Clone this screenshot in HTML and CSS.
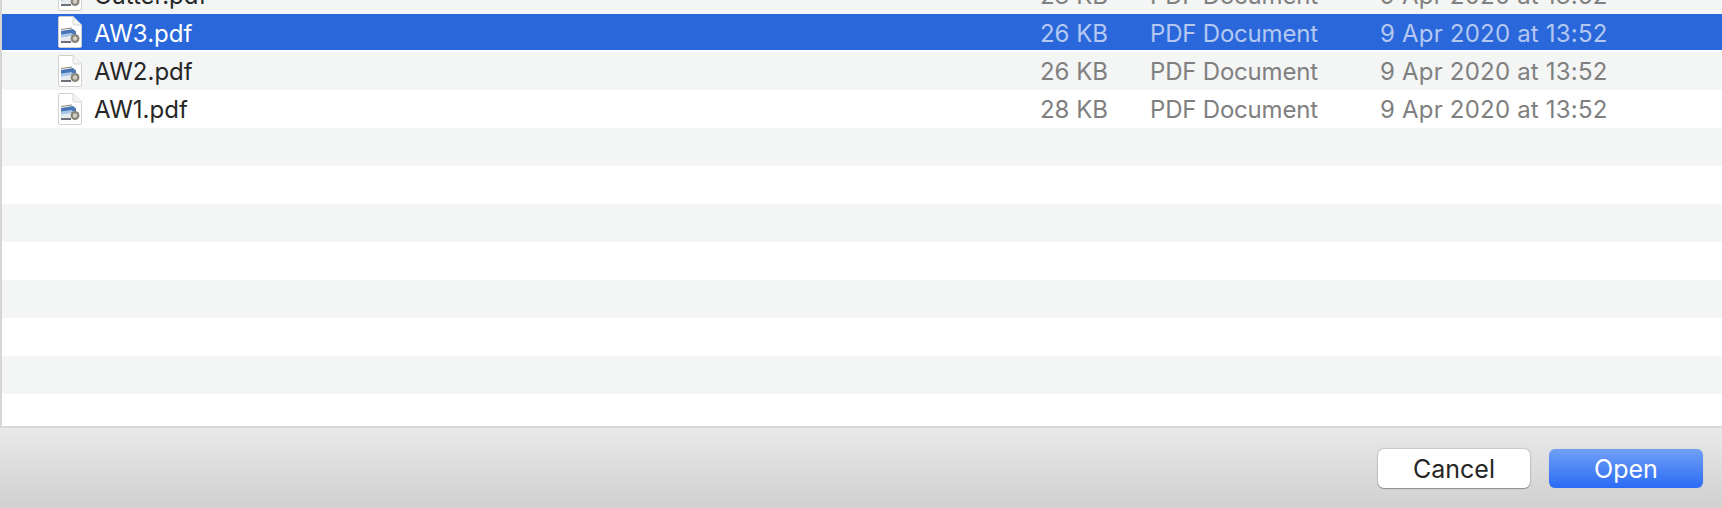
FILE: index.html
```html
<!DOCTYPE html>
<html lang="en">
<head>
    <meta charset="UTF-8">
    <meta name="viewport" content="width=device-width, initial-scale=1.0">
    <title>Open file</title>
    <link rel="stylesheet" href="styles.css">
</head>
<body>
    <svg class="defs" width="0" height="0">
        <symbol id="pdf-icon" viewBox="0 0 24 32">
            <path d="M1.5 .5H15L23.5 9V30a1.5 1.5 0 0 1-1.5 1.5H2A1.5 1.5 0 0 1 .5 30V2A1.5 1.5 0 0 1 1.5 .5Z" fill="#fff" stroke="#cfcfcf"/>
            <path d="M15 .5V7.5a1.5 1.5 0 0 0 1.5 1.5H23.5" fill="#f3f3f3" stroke="#d6d6d6"/>
            <path d="M3 15L15 13L18 15.5V18L3 20Z" fill="#4a76b8"/>
            <path d="M3 13.5L14 12" stroke="#8f8578" stroke-width="1" fill="none"/>
            <path d="M3 18.5L14 17V20L3 22Z" fill="#a9c8e8"/>
            <path d="M3 22L12 20.5V26H3Z" fill="#e6ebf0"/>
            <path d="M3 25H13V27H3Z" fill="#6d7078"/>
            <circle cx="17" cy="22.5" r="4.5" fill="#8a857b"/>
            <circle cx="17" cy="22.5" r="2.2" fill="#d2cec4"/>
        </symbol>
    </svg>
    <div class="dialog">
        <div class="file-list">
            <div class="row">
                <svg class="file-icon"><use href="#pdf-icon"/></svg>
                <span class="name">Cutter.pdf</span>
                <span class="size">23 KB</span>
                <span class="kind">PDF Document</span>
                <span class="date">9 Apr 2020 at 13:52</span>
            </div>
            <div class="row selected">
                <svg class="file-icon"><use href="#pdf-icon"/></svg>
                <span class="name">AW3.pdf</span>
                <span class="size">26 KB</span>
                <span class="kind">PDF Document</span>
                <span class="date">9 Apr 2020 at 13:52</span>
            </div>
            <div class="row">
                <svg class="file-icon"><use href="#pdf-icon"/></svg>
                <span class="name">AW2.pdf</span>
                <span class="size">26 KB</span>
                <span class="kind">PDF Document</span>
                <span class="date">9 Apr 2020 at 13:52</span>
            </div>
            <div class="row plain">
                <svg class="file-icon"><use href="#pdf-icon"/></svg>
                <span class="name">AW1.pdf</span>
                <span class="size">28 KB</span>
                <span class="kind">PDF Document</span>
                <span class="date">9 Apr 2020 at 13:52</span>
            </div>
            <div class="row"></div>
            <div class="row plain"></div>
            <div class="row"></div>
            <div class="row plain"></div>
            <div class="row"></div>
            <div class="row plain"></div>
            <div class="row"></div>
            <div class="row plain"></div>
        </div>
        <div class="footer">
            <button class="btn cancel">Cancel</button>
            <button class="btn open">Open</button>
        </div>
    </div>
</body>
</html>
```

FILE: styles.css
```css
html, body {
    margin: 0;
    height: 100%;
    overflow: hidden;
}
body {
    font-family: Inter, "Liberation Sans", sans-serif;
    background-color: #fff;
}
.defs {
    display: block;
    height: 0;
}
.dialog {
    display: flex;
    flex-direction: column;
    height: 508px;
}
.file-list {
    height: 426px;
    overflow: hidden;
    border-left: 2px solid #d6d6d6;
    border-bottom: 2px solid #dcd8d8;
    background-color: #fff;
}
.row {
    display: flex;
    align-items: center;
    box-sizing: border-box;
    height: 38px;
    padding-left: 56px;
    background-color: #f4f5f5;
    font-size: 24px;
    color: #262626;
}
.row:first-child {
    margin-top: -24px;
}
.row.plain {
    background-color: #fff;
}
.row.selected {
    background-color: #2967da;
    border-bottom: 2px solid #fff;
    color: #fff;
}
.selected .name,
.selected .size,
.selected .kind,
.selected .date {
    padding-top: 2px;
}
.file-icon {
    width: 24px;
    height: 32px;
    flex-shrink: 0;
}
.name {
    width: 915px;
    margin-left: 12px;
}
.size {
    width: 99px;
    text-align: right;
    color: #808080;
}
.kind {
    width: 230px;
    margin-left: 42px;
    letter-spacing: -0.2px;
    color: #808080;
}
.date {
    letter-spacing: 0.2px;
    color: #808080;
}
.selected .size,
.selected .kind,
.selected .date {
    color: #b4c8f1;
}
.footer {
    flex: 1;
    display: flex;
    justify-content: flex-end;
    align-items: flex-start;
    gap: 19px;
    padding: 21px 19px 0 0;
    background: linear-gradient(#e9e9e9, #d0d0d0);
}
.btn {
    height: 39px;
    border: none;
    border-radius: 6px;
    font-family: inherit;
    font-size: 25px;
    padding: 0;
}
.cancel {
    width: 152px;
    background-color: #fff;
    color: #262626;
    box-shadow: 0 0 1px 1px rgba(0, 0, 0, 0.12), 0 1px 1px rgba(0, 0, 0, 0.25);
}
.open {
    width: 154px;
    background: linear-gradient(#71a0f5, #2a6bf5);
    color: #fff;
    box-shadow: 0 0 1px rgba(0, 0, 0, 0.2);
}
```
